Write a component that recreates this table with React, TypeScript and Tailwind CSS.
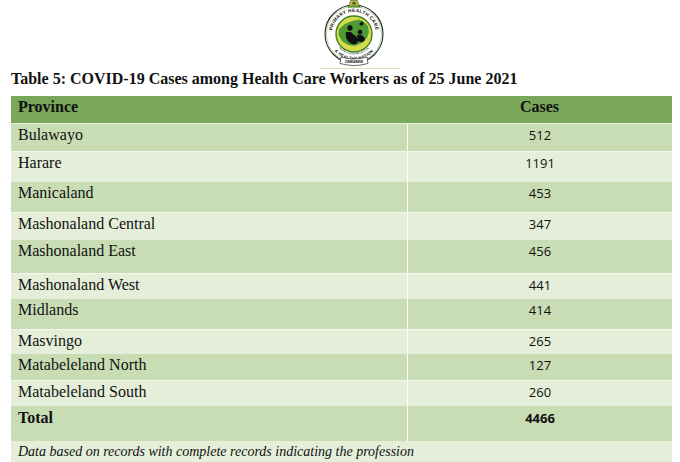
const rows = [
  { name: "Bulawayo", cases: "512", cls: "h-[28px] bg-[#c9ddb5]" },
  { name: "Harare", cases: "1191", cls: "h-[30px] bg-[#e4eed9]" },
  { name: "Manicaland", cases: "453", cls: "h-[31px] bg-[#c9ddb5]" },
  { name: "Mashonaland Central", cases: "347", cls: "h-[27px] bg-[#e4eed9]" },
  { name: "Mashonaland East", cases: "456", cls: "h-[34px] bg-[#c9ddb5]" },
  { name: "Mashonaland West", cases: "441", cls: "h-[25px] bg-[#e4eed9]" },
  { name: "Midlands", cases: "414", cls: "h-[31px] bg-[#c9ddb5]" },
  { name: "Masvingo", cases: "265", cls: "h-[24px] bg-[#e4eed9]" },
  { name: "Matabeleland North", cases: "127", cls: "h-[27px] bg-[#c9ddb5]" },
  { name: "Matabeleland South", cases: "260", cls: "h-[25px] bg-[#e4eed9]" },
];

function Logo() {
  return (
    <svg width="90" height="69" viewBox="0 0 90 69" className="ml-[34px] shrink-0">
      <defs>
        <path id="arcTop" d="M 22.95 43 A 22 22 0 1 1 61.05 43" />
        <path id="arcBot" d="M 17.2 24 A 26 26 0 1 0 66.8 24" />
        <path id="arcIn" d="M 22.6 25.3 A 20.5 20.5 0 1 0 61.4 25.3" />
      </defs>
      <g transform="translate(0 2)">
        {/* outer ring */}
        <circle cx="42" cy="32" r="29" fill="#fff" stroke="#2a2a2a" strokeWidth="1.1" />
        <circle cx="42" cy="32" r="27.6" fill="none" stroke="#7aa84e" strokeWidth="0.5" />
        {/* inner disc */}
        <circle cx="42" cy="32" r="18" fill="#d4dc4a" stroke="#3f7f2a" strokeWidth="1.4" />
        {/* map */}
        <path d="M 27 27 L 33 22 L 40 19 L 47 17.5 L 52 20 L 56 24 L 57 30 L 55 36 L 50 41 L 43 44 L 36 43 L 30 39 L 26.5 33 Z" fill="#4f9a35" />
        {/* figures */}
        <ellipse cx="38" cy="26" rx="2.6" ry="2.8" fill="#111" />
        <path d="M 34 30 C 33 35 35 40 40 42 C 44 43 47 41 46 37 C 45 34 41 33 39 30 Z" fill="#111" />
        <ellipse cx="48" cy="30" rx="2.4" ry="2.5" fill="#111" />
        <path d="M 45 33 C 48 32 52 33 53 37 C 53 40 49 41 46 39 Z" fill="#111" />
        <path d="M 47 22 L 50 19 L 52 22 L 49 24 Z" fill="#111" />
        {/* ring text */}
        <text fontFamily="Liberation Sans, sans-serif" fontSize="4.8" fontWeight="700" fill="#1a1a1a" letterSpacing="0.25">
          <textPath href="#arcTop" startOffset="50%" textAnchor="middle">PRIMARY HEALTH CARE</textPath>
        </text>
        <text fontFamily="Liberation Sans, sans-serif" fontSize="4.2" fontWeight="700" fill="#1a1a1a" letterSpacing="0.2">
          <textPath href="#arcBot" startOffset="50%" textAnchor="middle">&amp; HEALTHY NATION</textPath>
        </text>
        <text fontFamily="Liberation Sans, sans-serif" fontSize="1.7" fontWeight="700" fill="#1a1a1a">
          <textPath href="#arcIn" startOffset="50%" textAnchor="middle">MINISTRY OF HEALTH AND CHILD CARE</textPath>
        </text>
        {/* banner */}
        <path d="M 29 55 Q 42 59 55 55 L 56 61.5 Q 42 65.5 28 61.5 Z" fill="#fff" stroke="#2a2a2a" strokeWidth="0.7" />
        <text x="42" y="61" fontFamily="Liberation Sans, sans-serif" fontSize="3.4" fontWeight="700" fill="#1a1a1a" textAnchor="middle">
          ZIMBABWE
        </text>
      </g>
      {/* crest */}
      <path d="M 37 6 L 47 6 L 45.5 0.5 L 38.5 0.5 Z" fill="#c9b640" stroke="#3d6a23" strokeWidth="0.6" />
      <path d="M 39.5 3.4 L 42 1.3 L 44.5 3.4 L 42 5 Z" fill="#3d6a23" />
      <rect x="35.5" y="6" width="13" height="1.6" fill="#5d8f34" />
      {/* rule under logo */}
      <line x1="8" y1="68.5" x2="88" y2="68.5" stroke="#d7e4c8" strokeWidth="1" />
    </svg>
  );
}

export default function App() {
  return (
    <div className="w-[680px] h-[462px] bg-white overflow-hidden flex flex-col font-['Liberation_Serif',serif] text-[#111]">
      <div className="flex justify-center">
        <Logo />
      </div>
      <h1 className="pl-[11px] text-[16px] leading-[20px] font-bold text-[#111]">
        Table 5: COVID-19 Cases among Health Care Workers as of 25 June 2021
      </h1>
      <div className="mt-[7px] ml-[11px] w-[661px] flex flex-col">
        <div className="flex h-[27px] bg-[#79a85a] font-bold text-[16px] leading-[18px]">
          <div className="w-[396px] pl-[7px] pt-[2px]">Province</div>
          <div className="flex-1 pt-[2px] text-center">Cases</div>
        </div>
        {rows.map((r) => (
          <div key={r.name} className={`flex border-t border-white/50 ${r.cls}`}>
            <div className="w-[396px] pl-[7px] pt-[2px] text-[16px] leading-[18px]">{r.name}</div>
            <div className="flex-1 border-l border-white pt-[2px] text-center font-['Open_Sans',sans-serif] text-[13px] leading-[18px]">
              {r.cases}
            </div>
          </div>
        ))}
        <div className="flex h-[36px] bg-[#c9ddb5] border-t border-white/50">
          <div className="w-[396px] flex flex-col">
            <div className="h-[24px] pl-[7px] pt-[3px] font-bold text-[16px] leading-[18px]">Total</div>
            <div className="flex-1 border-t border-[#cfe1bd]" />
          </div>
          <div className="flex-1 border-l border-white flex flex-col">
            <div className="h-[24px] pt-[3px] text-center font-['Open_Sans',sans-serif] font-bold text-[13px] leading-[18px]">4466</div>
            <div className="flex-1 border-t border-[#cfe1bd]" />
          </div>
        </div>
        <div className="h-[30px] bg-[#e4eed9] pl-[7px] pt-[2px] italic text-[14px] leading-[17px]">
          Data based on records with complete records indicating the profession
        </div>
      </div>
    </div>
  );
}
